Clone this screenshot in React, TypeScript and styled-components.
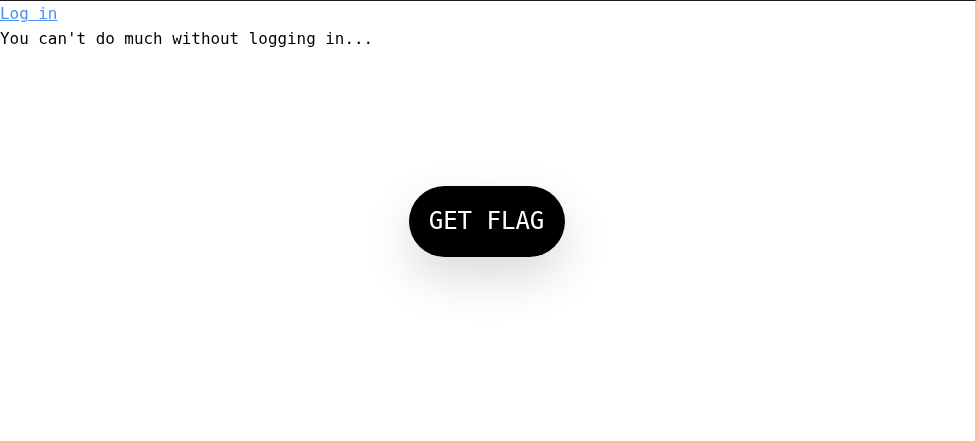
import React from 'react';
import styled, { createGlobalStyle } from 'styled-components';

const GlobalStyle = createGlobalStyle`
  html, body {
    margin: 0;
    padding: 0;
    background: #fff;
  }
  body {
    font-family: "DejaVu Sans Mono", "Liberation Mono", monospace;
    font-size: 16px;
    color: #000;
  }
`;

function App() {
    return (
        <Frame>
            <GlobalStyle />
            <Header>
                <LoginLink href="#">Log in</LoginLink>
                <Notice>You can't do much without logging in...</Notice>
            </Header>
            <Center>
                <FlagButton>GET FLAG</FlagButton>
            </Center>
        </Frame>
    );
}

const Frame = styled.div`
  position: fixed;
  inset: 0;
  box-sizing: border-box;
  border-top: 1px solid #1c1c1c;
  border-right: 2px solid #f6c49b;
  border-bottom: 2px solid #f6c49b;
  display: flex;
  flex-direction: column;
`;
const Header = styled.div`
  display: flex;
  flex-direction: column;
  line-height: 25px;
  font-size: 15.9px;
`;
const LoginLink = styled.a`
  color: #4d8ef2;
  text-decoration: underline;
  align-self: flex-start;
`;
const Notice = styled.span``;
const Center = styled.div`
  position: absolute;
  inset: 0;
  display: flex;
  align-items: center;
  justify-content: center;
  pointer-events: none;
`;
const FlagButton = styled.button`
  pointer-events: auto;
  font-family: "DejaVu Sans Mono", "Liberation Mono", monospace;
  font-size: 24px;
  color: #fff;
  background: #000;
  border: none;
  border-radius: 36px;
  width: 156px;
  height: 71px;
  padding: 0;
  margin-right: 2px;
  box-shadow: 0 20px 48px rgba(0, 0, 0, 0.15);
  cursor: pointer;
`;

export default App;
